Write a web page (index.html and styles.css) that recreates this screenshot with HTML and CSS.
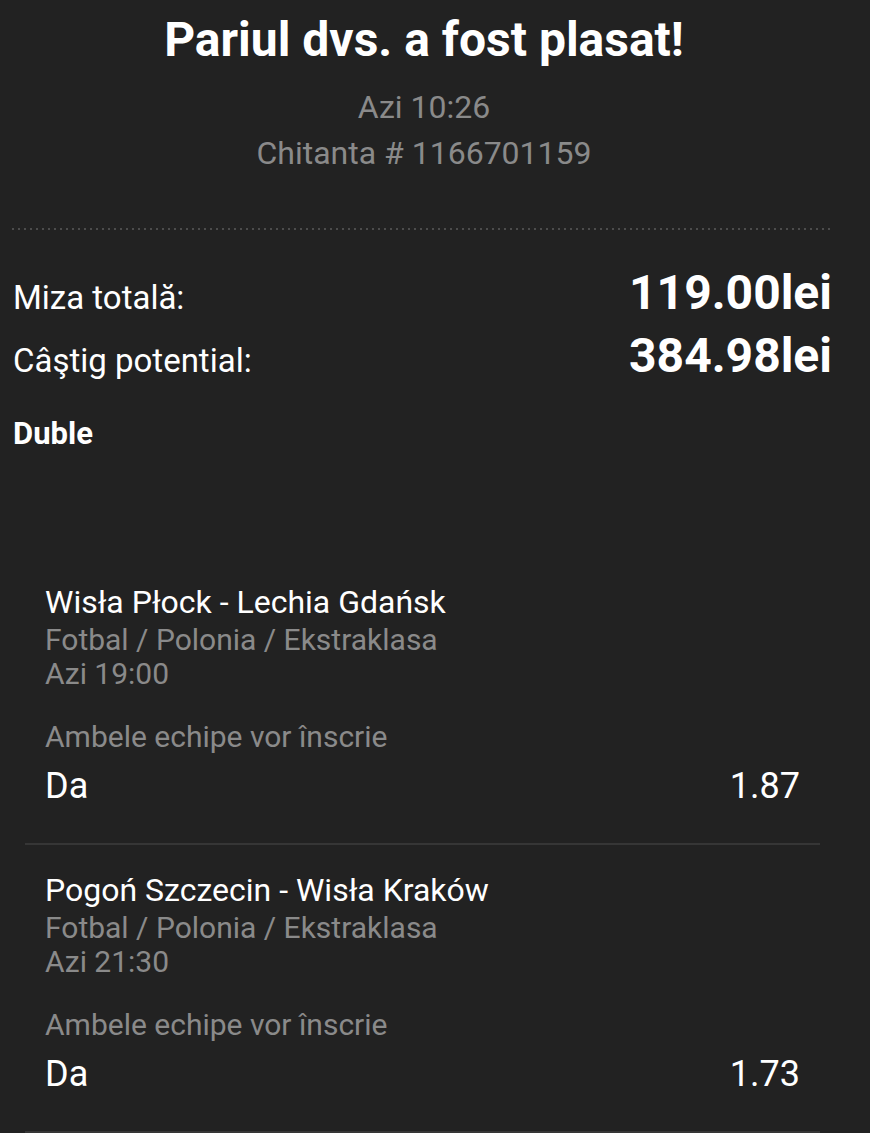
FILE: index.html
```html
<!DOCTYPE html>
<html>
<head>
    <meta charset="utf-8">
    <link rel="stylesheet" href="styles.css">
</head>
<body>
    <div class="receipt">
        <div class="receipt-head">
            <h1>Pariul dvs. a fost plasat!</h1>
            <p class="meta">Azi 10:26</p>
            <p class="meta">Chitanta # 1166701159</p>
        </div>

        <div class="totals">
            <div class="total-row">
                <span class="label">Miza totală:</span>
                <span class="amount">119.00lei</span>
            </div>
            <div class="total-row">
                <span class="label">Câştig potential:</span>
                <span class="amount">384.98lei</span>
            </div>
            <div class="bet-type">Duble</div>
        </div>

        <div class="selections">
            <div class="selection">
                <div class="event">Wisła Płock - Lechia Gdańsk</div>
                <div class="league">Fotbal / Polonia / Ekstraklasa</div>
                <div class="league">Azi 19:00</div>
                <div class="market">Ambele echipe vor înscrie</div>
                <div class="pick">
                    <span>Da</span>
                    <span>1.87</span>
                </div>
            </div>
            <div class="selection">
                <div class="event">Pogoń Szczecin - Wisła Kraków</div>
                <div class="league">Fotbal / Polonia / Ekstraklasa</div>
                <div class="league">Azi 21:30</div>
                <div class="market">Ambele echipe vor înscrie</div>
                <div class="pick">
                    <span>Da</span>
                    <span>1.73</span>
                </div>
            </div>
        </div>
    </div>
</body>
</html>
```

FILE: styles.css
```css
body {
    font-family: Roboto, "Liberation Sans", sans-serif;
    background-color: #222222;
    color: #fff;
    margin: 0;
    padding: 0;
}
.receipt {
    width: 870px;
}
.receipt-head {
    text-align: center;
    padding: 12px 22px 0 0;
}
h1 {
    font-size: 48px;
    font-weight: bold;
    line-height: 56px;
    margin: 0 0 16px 0;
}
.meta {
    color: #8a8a8a;
    font-size: 32px;
    line-height: 46px;
    margin: 0;
}
.totals {
    margin: 52px 38px 0 12px;
    padding: 36px 0 0 1px;
    background: repeating-linear-gradient(to right, #4c4c4c 0 2px, transparent 2px 6px) top left / 100% 2px no-repeat;
}
.total-row {
    display: flex;
    justify-content: space-between;
    align-items: baseline;
    height: 63px;
}
.label {
    font-size: 33px;
}
.amount {
    font-size: 48px;
    font-weight: bold;
}
.bet-type {
    font-size: 31px;
    font-weight: bold;
    margin-top: 25px;
}
.selections {
    margin-top: 129px;
}
.selection {
    margin: 0 50px 24px 25px;
    padding: 0 20px 32px 20px;
    border-bottom: 2px solid #363636;
}
.event {
    font-size: 32px;
    line-height: 42px;
}
.league {
    color: #8a8a8a;
    font-size: 30px;
    line-height: 34px;
}
.market {
    color: #8a8a8a;
    font-size: 30px;
    line-height: 34px;
    margin-top: 29px;
}
.pick {
    display: flex;
    justify-content: space-between;
    font-size: 36px;
    line-height: 50px;
    margin-top: 7px;
}
```
